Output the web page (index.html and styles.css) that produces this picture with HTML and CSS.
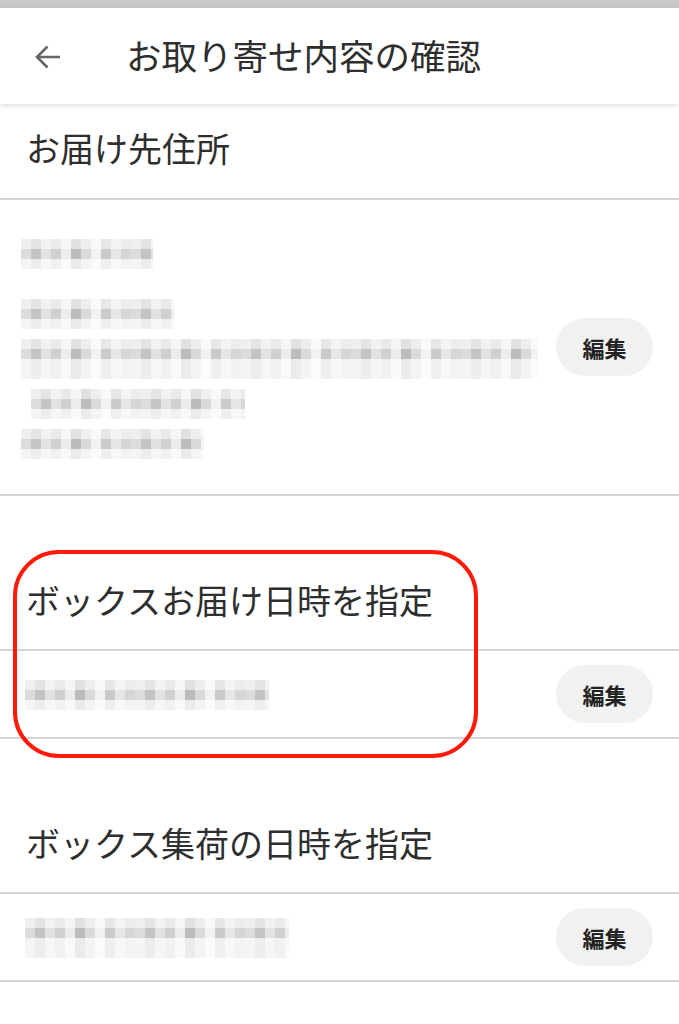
FILE: index.html
```html
<!DOCTYPE html>
<html lang="ja">

<head>
    <meta charset="UTF-8">
    <meta name="viewport" content="width=device-width, initial-scale=1.0">
    <title>お取り寄せ内容の確認</title>
    <link rel="stylesheet" href="styles.css">
</head>

<body>
    <div class="status-bar"></div>

    <header class="app-bar">
        <button class="back" aria-label="戻る">
            <svg width="28" height="28" viewBox="0 0 28 28">
                <path d="M26 14H3M13.5 3.5L3 14l10.5 10.5" fill="none" stroke="#666" stroke-width="2.6" />
            </svg>
        </button>
        <h1 class="title">お取り寄せ内容の確認</h1>
    </header>

    <main class="content">
        <h2 class="section-title first">お届け先住所</h2>
        <div class="row address">
            <div class="lines">
                <div class="mosaic w-name"></div>
                <div class="mosaic w-zip"></div>
                <div class="mosaic w-addr1"></div>
                <div class="mosaic w-addr2 indent"></div>
                <div class="mosaic w-tel"></div>
            </div>
            <button class="edit">編集</button>
        </div>

        <h2 class="section-title">ボックスお届け日時を指定</h2>
        <div class="row">
            <div class="lines">
                <div class="mosaic w-date1"></div>
            </div>
            <button class="edit">編集</button>
        </div>

        <h2 class="section-title">ボックス集荷の日時を指定</h2>
        <div class="row">
            <div class="lines">
                <div class="mosaic w-date2"></div>
            </div>
            <button class="edit">編集</button>
        </div>

        <!-- red highlight drawn over the delivery section -->
        <div class="highlight"></div>
    </main>
</body>

</html>
```

FILE: styles.css
```css
body {
    margin: 0;
    padding: 0;
    background: #fff;
    color: #2b2b2b;
    font-family: "Noto Sans CJK JP", "Noto Sans", Roboto, sans-serif;
}

.status-bar {
    height: 8px;
    background: #c8c8c8;
}

.app-bar {
    height: 96px;
    display: flex;
    align-items: center;
    background: #fff;
    box-shadow: 0 2px 5px rgba(0, 0, 0, 0.12);
    position: relative;
    z-index: 1;
}

.back {
    border: none;
    background: none;
    padding: 0;
    margin: 2px 0 0 34px;
    width: 28px;
    height: 28px;
    display: flex;
}

.title {
    margin: 0 0 4px 64px;
    font-size: 35.5px;
    font-weight: 400;
    color: #2e2e2e;
}

.content {
    position: relative;
}

.section-title {
    margin: 61px 0 0;
    height: 94px;
    display: flex;
    align-items: center;
    padding: 0 0 8px 26px;
    font-size: 34px;
    font-weight: 400;
    color: #2e2e2e;
    border-bottom: 2px solid #d4d4d4;
    box-sizing: border-box;
}

.section-title.first {
    margin-top: 0;
    height: 96px;
}

.row {
    height: 88px;
    display: flex;
    align-items: center;
    justify-content: space-between;
    padding: 0 26px 0 25px;
    border-bottom: 2px solid #d4d4d4;
    box-sizing: border-box;
}

.row.address {
    height: 296px;
    padding-left: 21px;
}

.lines {
    display: flex;
    flex-direction: column;
    gap: 10px;
}

.address .lines {
    padding-top: 4px;
}

.address .w-name {
    margin-bottom: 20px;
}

/* pixelated (blurred) personal data */
.mosaic {
    height: 30px;
    background:
        linear-gradient(to bottom, rgba(255, 255, 255, 0.55) 0 10px, transparent 10px 20px, rgba(255, 255, 255, 0.7) 20px 30px),
        repeating-linear-gradient(to right,
            #dcdcdc 0 10px, #c4c4c4 10px 20px, #e2e2e2 20px 30px, #d0d0d0 30px 40px,
            #ececec 40px 50px, #bcbcbc 50px 60px, #dadada 60px 70px, #f2f2f2 70px 80px,
            #cacaca 80px 90px, #e6e6e6 90px 100px, #d6d6d6 100px 110px);
}

.indent {
    margin-left: 10px;
}

.w-name { width: 132px; }
.w-zip { width: 153px; }
.w-addr1 { width: 517px; height: 40px; }
.w-addr2 { width: 214px; }
.w-tel { width: 183px; }
.w-date1 { width: 244px; margin-top: 2px; }
.w-date2 { width: 264px; margin-top: 2px; height: 40px; }

.edit {
    width: 97px;
    height: 58px;
    border: none;
    border-radius: 29px;
    background: #f1f1f1;
    color: #222;
    font-family: inherit;
    font-size: 22px;
    font-weight: 700;
    padding: 0;
    flex-shrink: 0;
}

.highlight {
    position: absolute;
    left: 13px;
    top: 446px;
    width: 465px;
    height: 208px;
    border: 4px solid #ff1a0a;
    border-radius: 46px;
    box-sizing: border-box;
    pointer-events: none;
}
```
